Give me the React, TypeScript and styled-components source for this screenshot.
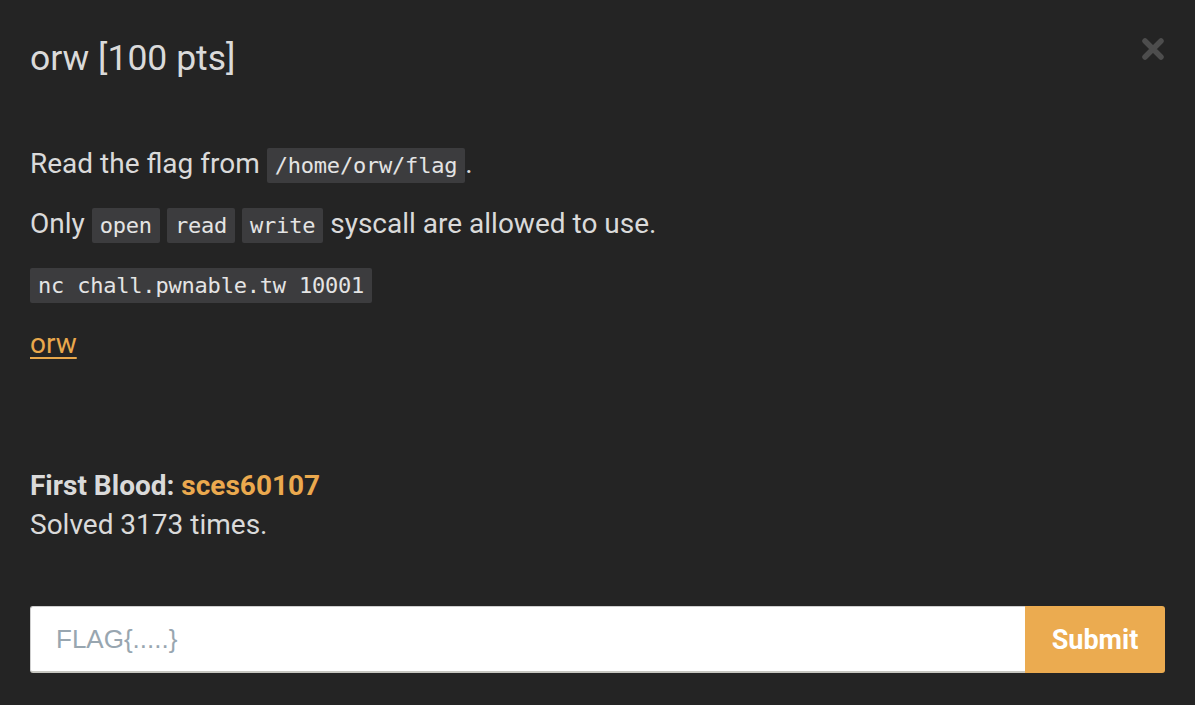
import React from "react";
import styled, { createGlobalStyle } from "styled-components";

const Global = createGlobalStyle`
  html, body { margin: 0; padding: 0; background: #242424; }
  body { font-family: Roboto, "Noto Sans", sans-serif; color: #dcdcdc; }
`;

const Modal = styled.div`
  width: 1195px;
  height: 705px;
  box-sizing: border-box;
  background: #242424;
  display: flex;
  flex-direction: column;
`;

const Header = styled.div`
  display: flex;
  align-items: center;
  justify-content: space-between;
  padding: 36px 30px 0 30px;
  height: 79px;
  box-sizing: border-box;
`;

const Title = styled.h4`
  margin: 0;
  font-size: 35.5px;
  font-weight: 400;
  line-height: 42px;
  color: #dadada;
`;

const Close = styled.button`
  background: none;
  border: 0;
  padding: 0;
  margin: -18px 0 0 0;
  width: 24px;
  height: 24px;
  display: flex;
  align-items: center;
  justify-content: center;
  cursor: pointer;
`;

const Body = styled.div`
  padding: 67px 30px 0 30px;
  display: flex;
  flex-direction: column;
`;

const P = styled.p`
  margin: 0 0 24px 0;
  font-size: 28px;
  line-height: 36px;
  height: 36px;
  color: #dadada;
`;

const Code = styled.code`
  font-family: "DejaVu Sans Mono", "Liberation Mono", monospace;
  font-size: 22px;
  line-height: 1;
  background: #3c3c3e;
  color: #e4e4e4;
  padding: 5px 8px;
  border-radius: 2px;
  letter-spacing: -0.2px;
`;

const Link = styled.a`
  color: #e9a84c;
  text-decoration: underline;
  text-underline-offset: 4px;
`;

const Stats = styled.div`
  margin-top: 80px;
  font-size: 28px;
  line-height: 39px;
  color: #dadada;
`;

const Strong = styled.strong`
  font-weight: 700;
`;

const Blood = styled.span`
  color: #eba94e;
  font-weight: 700;
`;

const Form = styled.form`
  display: flex;
  margin: 62px 30px 0 30px;
  height: 67px;
`;

const Input = styled.input`
  flex: 1;
  box-sizing: border-box;
  border: 1px solid #cfcfcf;
  border-bottom: 2px solid #c6c6c0;
  border-right: 0;
  border-radius: 3px 0 0 3px;
  background: #ffffff;
  padding: 0 25px;
  font-family: "Liberation Sans", Arial, sans-serif;
  font-size: 26px;
  color: #333;
  outline: none;
  &::placeholder { color: #98a6b0; }
`;

const Submit = styled.button`
  width: 140px;
  border: 0;
  border-radius: 0 3px 3px 0;
  background: #ebab50;
  color: #ffffff;
  font-family: Roboto, sans-serif;
  font-weight: 700;
  font-size: 27px;
  cursor: pointer;
`;

export default function App() {
  return (
    <Modal>
      <Global />
      <Header>
        <Title>orw [100 pts]</Title>
        <Close aria-label="close">
          <svg width="22" height="22" viewBox="0 0 22 22">
            <path d="M3 3 L19 19 M19 3 L3 19" stroke="#4d4d4d" strokeWidth="5.5" strokeLinecap="round" />
          </svg>
        </Close>
      </Header>
      <Body>
        <P>
          Read the flag from <Code>/home/orw/flag</Code>.
        </P>
        <P>
          Only <Code>open</Code> <Code>read</Code> <Code>write</Code> syscall are allowed to use.
        </P>
        <P>
          <Code>nc chall.pwnable.tw 10001</Code>
        </P>
        <P>
          <Link href="#">orw</Link>
        </P>
        <Stats>
          <Strong>First Blood: </Strong>
          <Blood>sces60107</Blood>
          <br />
          Solved 3173 times.
        </Stats>
      </Body>
      <Form onSubmit={(e) => e.preventDefault()}>
        <Input placeholder="FLAG{.....}" />
        <Submit type="submit">Submit</Submit>
      </Form>
    </Modal>
  );
}
